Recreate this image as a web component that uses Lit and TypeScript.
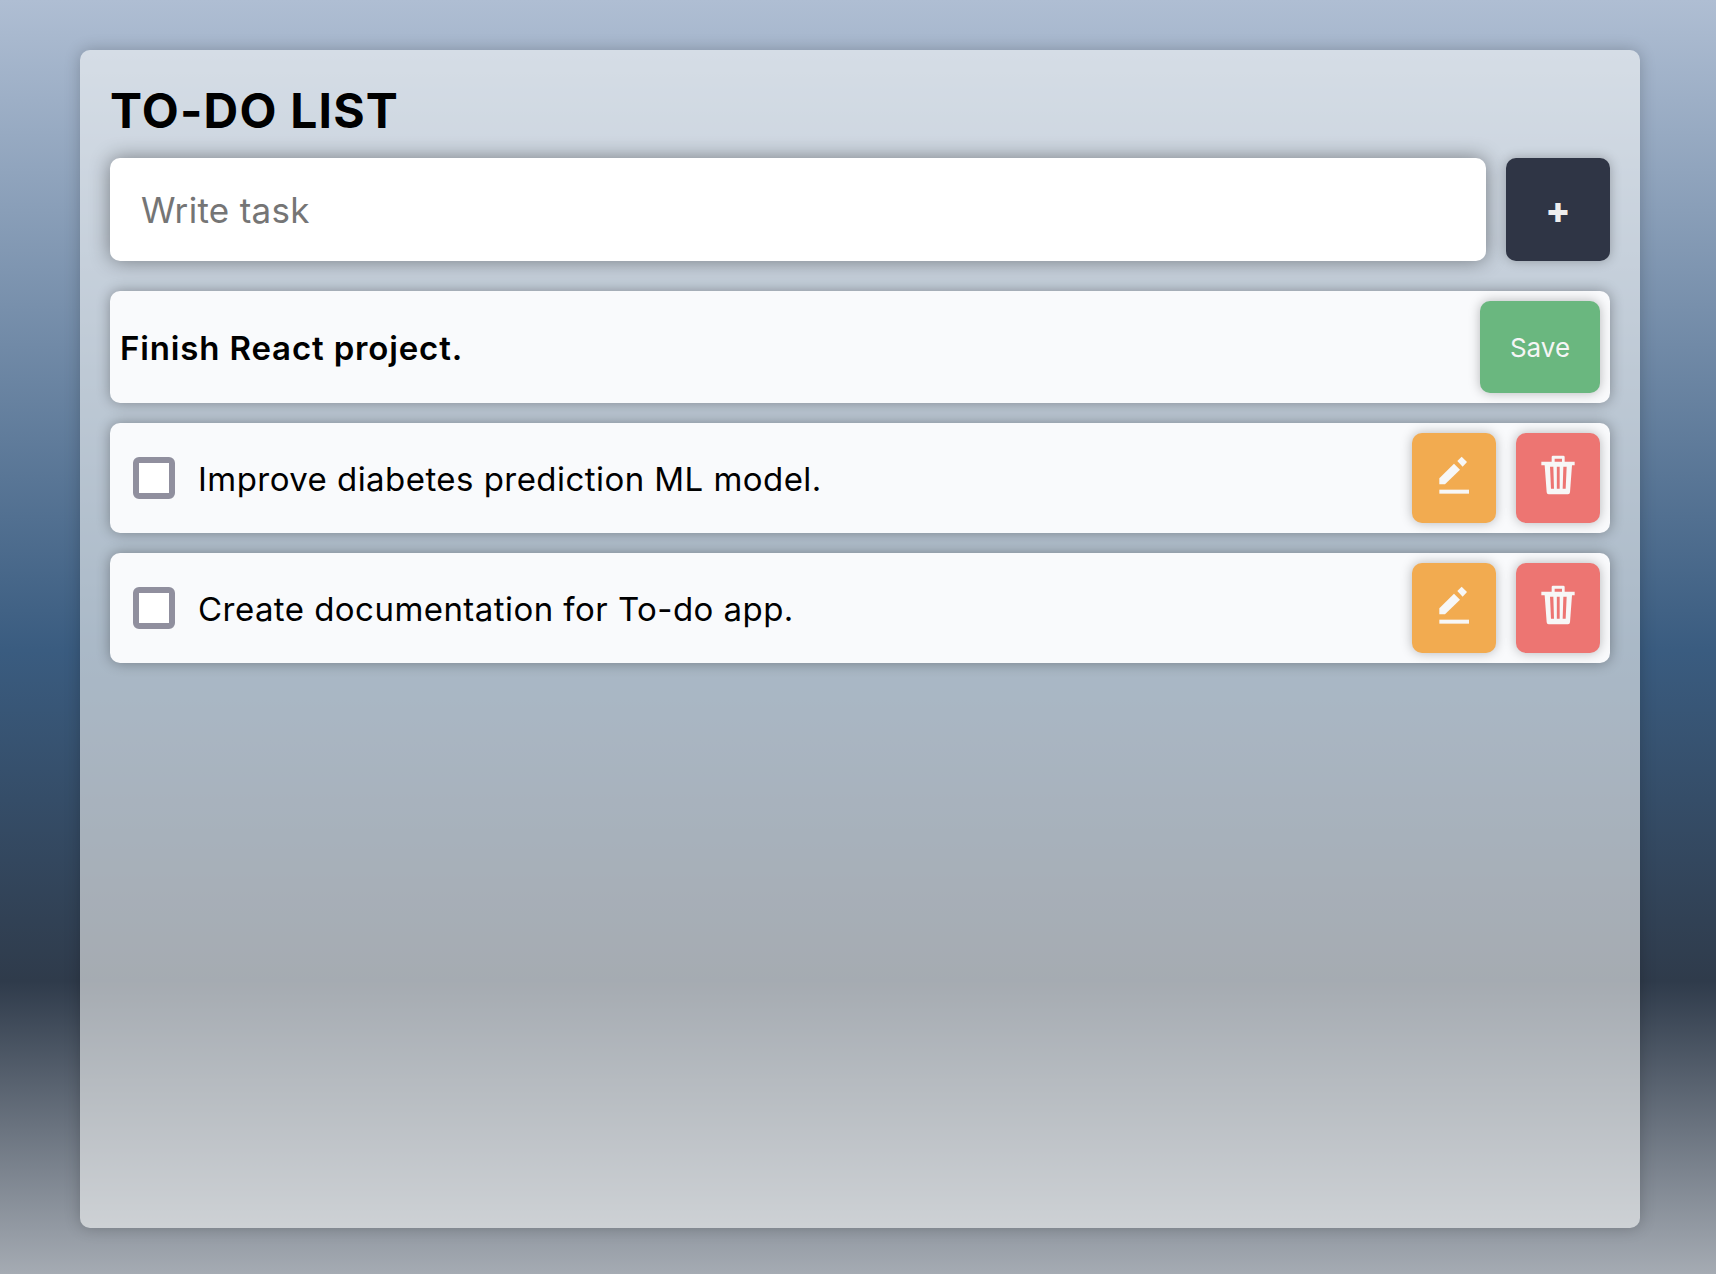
import {LitElement, html, css, svg} from "lit";
import {customElement, state} from "lit/decorators.js";

interface Task { id: number; text: string; done: boolean; editing: boolean; }

const pencilIcon = html`<svg class="icon" viewBox="0 0 144 144" aria-hidden="true">${svg`
  <path d="M28 85 L72 41 L90 59 L45 103 H28Z"/>
  <path d="M82 33 L95 20 L111 36 L98 50Z"/>
  <path d="M28 119 H117 V131 H28Z"/>`}</svg>`;

const trashIcon = html`<svg class="icon" viewBox="0 0 144 144" aria-hidden="true">${svg`
  <path fill-rule="evenodd" d="M53 35 V21 Q53 17 57 17 H88 Q92 17 92 21 V35 H122 V46 H114 L108 127 Q107.500 133 102 133 H44 Q38.500 133 38 127 L32 46 H22 V35Z M62 35 H84 V26 H62Z M48 50 L51 116 H60 L58 50Z M68.500 50 V116 H77 V50Z M88 50 L86 116 H95 L98 50Z"/>`}</svg>`;

@customElement("app-root")
export class AppRoot extends LitElement {
  static styles = css`
    :host {
      display: block;
      box-sizing: border-box;
      height: 100vh;
      padding: 50px 76px 46px 80px;
      font-family: Inter, sans-serif;
      color: #000;
      background: linear-gradient(#afbed3 0%, #3a5c80 51%, #2f3b4b 77%, #a5abb3 100%);
    }
    * { box-sizing: border-box; }
    .panel {
      height: 100%;
      padding: 30px;
      border-radius: 10px;
      background: rgba(245, 246, 246, 0.6);
      box-shadow: 0 0 16px rgba(0, 0, 0, 0.22);
    }
    .title {
      margin: 0;
      height: 78px;
      font-size: 48px;
      font-weight: 700;
      line-height: 61px;
      letter-spacing: 1.2px;
    }
    .entry { display: flex; gap: 20px; height: 103px; }
    .field {
      flex: 1;
      min-width: 0;
      padding: 0 31px;
      border: 0;
      border-radius: 10px;
      background: #fff;
      font: 400 35px Inter, sans-serif;
      letter-spacing: 0.3px;
      box-shadow: 0 0 20px rgba(0, 0, 0, 0.42);
      outline: none;
    }
    .field::placeholder { color: #757575; opacity: 1; }
    button {
      border: 0;
      padding: 0;
      border-radius: 10px;
      color: #f5f5f5;
      font-family: inherit;
      box-shadow: 0 0 12px rgba(0, 0, 0, 0.27);
    }
    .add {
      width: 104px;
      background: #2f3545;
      color: #eee;
      font-size: 37px;
      font-weight: 800;
    }
    .list { display: grid; gap: 20px; margin: 30px 0 0; padding: 0; list-style: none; }
    .row {
      display: flex;
      gap: 20px;
      height: 110px;
      padding: 10px;
      border-radius: 10px;
      background: #f9fafc;
      box-shadow: 0 0 14px rgba(0, 0, 0, 0.33);
      font-size: 33px;
      letter-spacing: 0.45px;
    }
    .editing { height: 112px; font-weight: 600; letter-spacing: 0.85px; }
    .text { flex: 1; align-self: center; padding-top: 2px; line-height: 40px; }
    .editing .text { padding-top: 1px; }
    .check {
      appearance: none;
      align-self: center;
      width: 42px;
      height: 42px;
      margin: 0 3px 0 13px;
      border: 6px solid #908f9e;
      border-radius: 6px;
      background: #fff;
    }
    .save {
      width: 120px;
      background: #6ab77f;
      font-size: 26px;
      font-weight: 400;
      letter-spacing: 0;
    }
    .edit, .remove { width: 84px; padding: 17px 18px 25px; }
    .edit { background: #f2ab50; }
    .remove { background: #ed7572; }
    .icon { display: block; width: 48px; height: 48px; fill: #f7f7f7; }
  `;

  @state() private tasks: Task[] = [
    {id: 1, text: "Finish React project.", done: false, editing: true},
    {id: 2, text: "Improve diabetes prediction ML model.", done: false, editing: false},
    {id: 3, text: "Create documentation for To-do app.", done: false, editing: false},
  ];

  private patch(id: number, change: Partial<Task>) {
    this.tasks = this.tasks.map(t => (t.id === id ? {...t, ...change} : t));
  }

  private add() {
    const field = this.renderRoot.querySelector<HTMLInputElement>(".field")!;
    const text = field.value.trim();
    if (!text) return;
    this.tasks = [...this.tasks, {id: Date.now(), text, done: false, editing: false}];
    field.value = "";
  }

  private row(t: Task) {
    if (t.editing) {
      return html`<li class="row editing">
        <span class="text">${t.text}</span>
        <button class="save" @click=${() => this.patch(t.id, {editing: false})}>Save</button>
      </li>`;
    }
    return html`<li class="row">
      <input class="check" type="checkbox" .checked=${t.done}
        @change=${() => this.patch(t.id, {done: !t.done})}>
      <span class="text">${t.text}</span>
      <button class="edit" @click=${() => this.patch(t.id, {editing: true})}>${pencilIcon}</button>
      <button class="remove" @click=${() => { this.tasks = this.tasks.filter(x => x.id !== t.id); }}>${trashIcon}</button>
    </li>`;
  }

  render() {
    return html`<main class="panel">
      <h1 class="title">TO-DO LIST</h1>
      <div class="entry">
        <input class="field" type="text" placeholder="Write task">
        <button class="add" @click=${this.add}>+</button>
      </div>
      <ul class="list">${this.tasks.map(t => this.row(t))}</ul>
    </main>`;
  }
}
